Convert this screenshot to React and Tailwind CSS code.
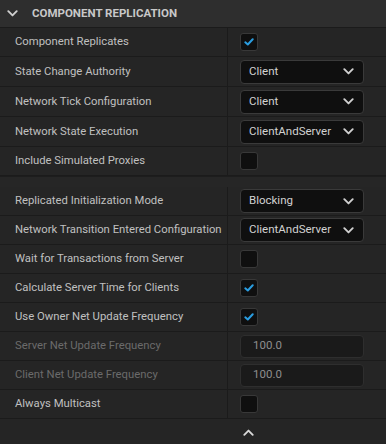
import React from "react";

const Chevron = ({ up = false, className = "", w = 11, h = 7 }) => (
  <svg width={w} height={h} viewBox="0 0 11 7" className={className}>
    <path
      d={up ? "M1.3 5.8 L5.5 1.6 L9.7 5.8" : "M1.3 1.2 L5.5 5.4 L9.7 1.2"}
      fill="none"
      stroke="currentColor"
      strokeWidth="1.9"
      strokeLinecap="round"
      strokeLinejoin="round"
    />
  </svg>
);

const Checkbox = ({ checked }) => (
  <div className="w-[18px] h-[18px] rounded-[3px] bg-[#0f0f0f] border border-[#383838] flex items-center justify-center">
    {checked && (
      <svg width="10" height="8" viewBox="0 0 10 8">
        <path
          d="M1.3 4.3 L3.8 6.5 L8.7 1.3"
          fill="none"
          stroke="#2a9de0"
          strokeWidth="2"
          strokeLinecap="round"
          strokeLinejoin="round"
        />
      </svg>
    )}
  </div>
);

const Dropdown = ({ value }) => (
  <div className="w-[124px] h-[24px] rounded-[4px] bg-[#0f0f0f] border border-[#3a3a3a] flex items-center justify-between pl-[8px] pr-[9px] text-[#d2d2d2] text-[11.5px]">
    <span>{value}</span>
    <Chevron className="text-[#d0d0d0]" />
  </div>
);

const NumInput = ({ value }) => (
  <div className="w-[124px] h-[23px] rounded-[4px] bg-[#1a1a1a] border border-[#2e2e2e] flex items-center pl-[12px] text-[#8e8e8e] text-[11.5px]">
    {value}
  </div>
);

const Row = ({ label, h, disabled, children }) => (
  <div className="flex border-b border-[#1b1b1b]" style={{ height: h + 1 }}>
    <div
      className={`w-[228px] shrink-0 flex items-center pl-[15px] pt-[1px] text-[11.3px] border-r border-[#1b1b1b] ${
        disabled ? "text-[#6b6b6b]" : "text-[#c0c0c0]"
      }`}
    >
      {label}
    </div>
    <div className="flex-1 flex items-center pl-[12px]">{children}</div>
  </div>
);

export default function App() {
  const s1 = [
    { label: "Component Replicates", h: 28, c: <Checkbox checked /> },
    { label: "State Change Authority", h: 29, c: <Dropdown value="Client" /> },
    { label: "Network Tick Configuration", h: 29, c: <Dropdown value="Client" /> },
    { label: "Network State Execution", h: 29, c: <Dropdown value="ClientAndServer" /> },
    { label: "Include Simulated Proxies", h: 28, c: <Checkbox /> },
  ];
  const s2 = [
    { label: "Replicated Initialization Mode", h: 28, c: <Dropdown value="Blocking" /> },
    { label: "Network Transition Entered Configuration", h: 28, c: <Dropdown value="ClientAndServer" /> },
    { label: "Wait for Transactions from Server", h: 28, c: <Checkbox /> },
    { label: "Calculate Server Time for Clients", h: 28, c: <Checkbox checked /> },
    { label: "Use Owner Net Update Frequency", h: 28, c: <Checkbox checked /> },
    { label: "Server Net Update Frequency", h: 28, c: <NumInput value="100.0" />, d: true },
    { label: "Client Net Update Frequency", h: 28, c: <NumInput value="100.0" />, d: true },
    { label: "Always Multicast", h: 28, c: <Checkbox /> },
  ];
  return (
    <div
      className="w-[386px] h-[444px] bg-[#252525] overflow-hidden"
      style={{ fontFamily: "Roboto, 'Noto Sans', sans-serif" }}
    >
      <div className="h-[28px] bg-[#2e2e2e] border-b border-[#1b1b1b] flex items-center">
        <Chevron className="text-[#cfcfcf] ml-[7px]" />
        <span className="ml-[14px] text-[11.5px] font-bold text-[#c8c8c8]">
          COMPONENT REPLICATION
        </span>
      </div>
      {s1.map((r) => (
        <Row key={r.label} label={r.label} h={r.h} disabled={r.d}>
          {r.c}
        </Row>
      ))}
      <div className="h-[11px] bg-[#262626] border-t border-[#1d1d1d]" />
      {s2.map((r) => (
        <Row key={r.label} label={r.label} h={r.h} disabled={r.d}>
          {r.c}
        </Row>
      ))}
      <div className="h-[26px] flex items-center pl-[243px] pt-[1px]">
        <Chevron up className="text-[#d8d8d8]" />
      </div>
    </div>
  );
}
